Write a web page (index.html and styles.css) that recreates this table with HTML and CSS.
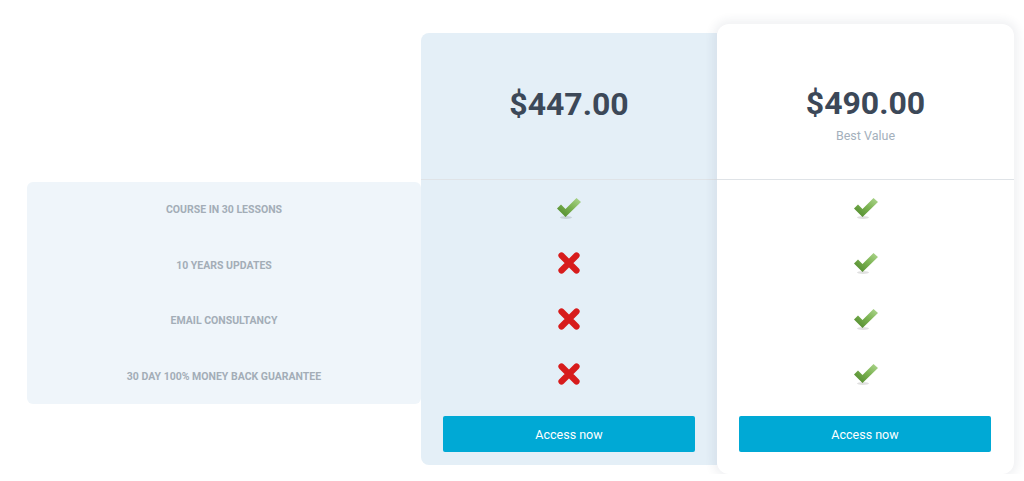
FILE: index.html
```html
<!DOCTYPE html>
<html lang="en">
<head>
<meta charset="utf-8">
<title>Pricing</title>
<link rel="stylesheet" href="styles.css">
</head>
<body>
<svg width="0" height="0" class="defs" aria-hidden="true">
  <defs>
    <linearGradient id="chk" x1="1" y1="0" x2="0" y2="1">
      <stop offset="0" stop-color="#b0d892"/>
      <stop offset="0.45" stop-color="#7cb352"/>
      <stop offset="1" stop-color="#4a8327"/>
    </linearGradient>
    <symbol id="check" viewBox="0 0 26 24">
      <ellipse cx="10" cy="21.5" rx="6" ry="1.5" fill="#000" opacity="0.12"/>
      <polygon points="1,12.5 5,8.5 9.5,13 20.5,2 25,6 9.5,21" fill="url(#chk)"/>
    </symbol>
    <symbol id="cross" viewBox="0 0 24 24">
      <path d="M4.5 4.5 L19.5 19.5 M19.5 4.5 L4.5 19.5" stroke="#d71c1c" stroke-width="6.2" stroke-linecap="round" fill="none"/>
    </symbol>
  </defs>
</svg>
<div class="pricing">
  <div class="labels">
    <div class="row">COURSE IN 30 LESSONS</div>
    <div class="row">10 YEARS UPDATES</div>
    <div class="row">EMAIL CONSULTANCY</div>
    <div class="row">30 DAY 100% MONEY BACK GUARANTEE</div>
  </div>
  <div class="plan plan-basic">
    <div class="head">
      <div class="price">$447.00</div>
    </div>
    <div class="row"><svg class="ic-check"><use href="#check"/></svg></div>
    <div class="row"><svg class="ic-cross"><use href="#cross"/></svg></div>
    <div class="row"><svg class="ic-cross"><use href="#cross"/></svg></div>
    <div class="row"><svg class="ic-cross"><use href="#cross"/></svg></div>
    <div class="foot"><a class="btn" href="#">Access now</a></div>
  </div>
  <div class="plan plan-best">
    <div class="head">
      <div class="price">$490.00</div>
      <div class="sub">Best Value</div>
    </div>
    <div class="row"><svg class="ic-check"><use href="#check"/></svg></div>
    <div class="row"><svg class="ic-check"><use href="#check"/></svg></div>
    <div class="row"><svg class="ic-check"><use href="#check"/></svg></div>
    <div class="row"><svg class="ic-check"><use href="#check"/></svg></div>
    <div class="foot"><a class="btn" href="#">Access now</a></div>
  </div>
</div>
</body>
</html>
```
FILE: styles.css
```css
* { box-sizing: border-box; }
html, body { margin: 0; padding: 0; background: #fff; }
body { font-family: Roboto, "Liberation Sans", Arial, sans-serif; }
.defs { position: absolute; width: 0; height: 0; overflow: hidden; }

.pricing {
  display: flex;
  align-items: flex-start;
  padding: 33px 0 0 27px;
}

.labels {
  width: 394px;
  margin-top: 149px;
  background: #eff5fa;
  border-radius: 6px;
}
.labels .row {
  height: 55.5px;
  display: flex;
  align-items: center;
  justify-content: center;
  font-size: 10.5px;
  font-weight: 700;
  color: #a3adb7;
}

.plan {
  display: flex;
  flex-direction: column;
}
.plan .row {
  height: 55.5px;
  display: flex;
  align-items: center;
  justify-content: center;
}
.plan-basic {
  width: 296px;
  background: #e4eff7;
  border-radius: 8px 0 0 8px;
}
.plan-basic .head {
  height: 147px;
  padding-top: 52px;
}
.plan-basic .foot {
  padding: 14px 22px 13px;
}
.plan-best {
  width: 297px;
  margin-top: -9px;
  background: #fff;
  border-radius: 12px;
  box-shadow: 0 0 10px 4px rgba(40, 60, 80, 0.07);
  position: relative;
}
.plan-best .head {
  height: 156px;
  padding-top: 60px;
}
.plan-best .foot {
  padding: 14px 23px 22px 22px;
}
.head {
  border-bottom: 1px solid #dfe3e7;
  text-align: center;
}
.price {
  font-size: 32px;
  line-height: 38px;
  font-weight: 700;
  color: #3c4858;
}
.sub {
  font-size: 12.5px;
  line-height: 16px;
  margin-top: 6px;
  color: #a4b0bc;
}
.ic-check { width: 26px; height: 24px; }
.ic-cross { width: 24px; height: 24px; }

.btn {
  display: flex;
  align-items: center;
  justify-content: center;
  height: 36px;
  background: #00a9d5;
  border-radius: 2px;
  color: #fff;
  text-decoration: none;
  font-size: 12.5px;
}
```
